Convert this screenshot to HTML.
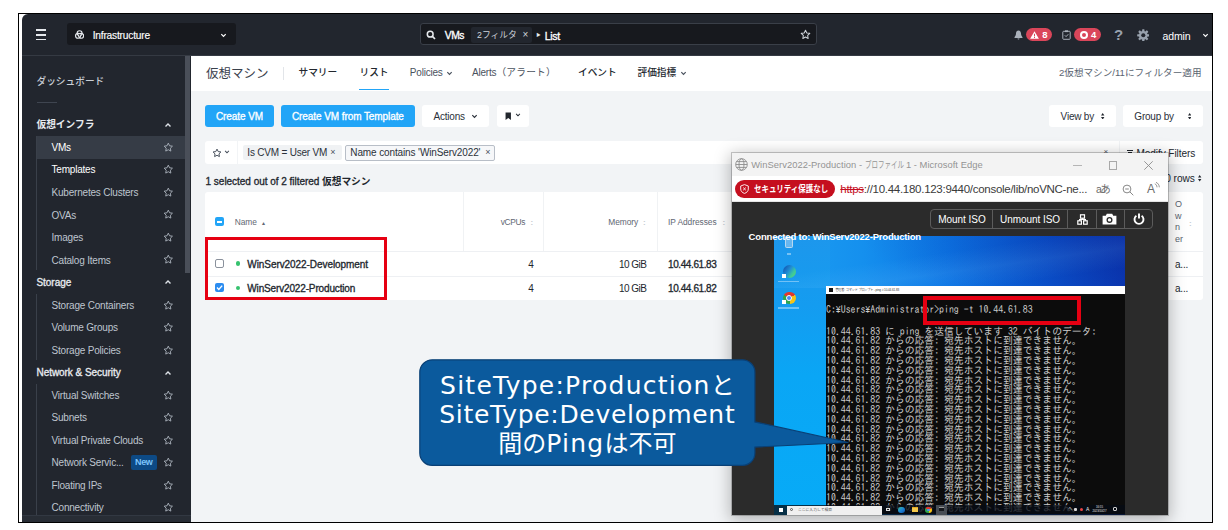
<!DOCTYPE html>
<html lang="ja"><head><meta charset="utf-8"><title>VMs</title>
<style>
*{box-sizing:border-box;margin:0;padding:0}
html,body{width:1228px;height:530px;overflow:hidden;background:#fff}
body{position:relative;font-family:"Liberation Sans","Noto Sans CJK JP",sans-serif;font-size:10px;letter-spacing:-.2px;color:#22272e}
.a{position:absolute;white-space:nowrap}
.b{font-weight:bold;letter-spacing:-.4px}
.sb{font-weight:normal;-webkit-text-stroke:.32px currentColor;letter-spacing:-.08px}
#frame{left:18px;top:13px;width:1195px;height:510px;border:1px solid #000;background:#fff;overflow:hidden}
#app{left:3px;top:0;width:1190px;height:508px;background:#f2f4f6;border-radius:6px 0 0 0;overflow:hidden}
#top{left:0;top:0;width:1190px;height:42px;background:#22262e;border-bottom:1px solid #353a43}
#side{left:0;top:42px;width:169px;height:466px;background:#22262e}
.si{left:29.500px;color:#bfc5ce;font-size:10px;line-height:14px}
.sh{left:14.500px;color:#e8ebef;font-weight:normal;-webkit-text-stroke:.32px currentColor;font-size:10px;line-height:14px;letter-spacing:-.05px}
.cj{font-size:9.700px;letter-spacing:0}
.star{left:140.700px;width:10.600px;height:10.600px}
.chev{left:142px;width:8px;height:8px}
.vl{left:14px;width:1px;background:#3a404a}
#tabs{left:168px;top:42px;width:1022px;height:34px;background:#fff}
.tab{top:11px;font-size:9.700px;line-height:14px;color:#4a525e;letter-spacing:0;font-weight:500}
.btn{top:91px;height:22px;border-radius:3px;line-height:24.400px;font-size:10px;text-align:center}
.blue{background:#22a5f7;color:#fff}
.wbtn{background:#fff;color:#2b313a}
.th{font-size:8.400px;color:#5f6773;line-height:12px;letter-spacing:-.05px}
.td{font-size:10px;color:#22272e;line-height:14px}
.cmd{font-family:"IPAGothic","Noto Sans Mono CJK JP",monospace;font-size:10.400px;line-height:9.790px;color:#cdcdcd;white-space:pre;letter-spacing:0;transform:scaleX(.9465);transform-origin:0 0}
</style></head><body>
<div id="frame" class="a">
<div id="app" class="a">
<div id="top" class="a" style="height:42px">
<div class="a" style="left:13.600000000000001px;top:14.8px;width:10.4px;height:1.8px;background:#e6e9ed"></div>
<div class="a" style="left:13.600000000000001px;top:19.9px;width:10.4px;height:1.8px;background:#e6e9ed"></div>
<div class="a" style="left:13.600000000000001px;top:24.6px;width:10.4px;height:1.8px;background:#e6e9ed"></div>
<div class="a" style="left:45px;top:9.3px;width:168.7px;height:22px;background:#17191e;border-radius:3px"></div>
<svg class="a" style="left:53px;top:16px;width:9.200px;height:9.200px" viewBox="0 0 10 10"><g fill="none" stroke="#e6e9ed" stroke-width="1.250"><circle cx="5" cy="3.500" r="2.700"/><circle cx="3.300" cy="6.300" r="2.700"/><circle cx="6.700" cy="6.300" r="2.700"/></g><path d="M3.700 4.700h2.600L5 6.900z" fill="#17191e"/></svg>
<div class="a " style="left:70.7px;top:14.7px;font-size:10.200px;line-height:14px;color:#fff;letter-spacing:-.2px;-webkit-text-stroke:.15px #fff">Infrastructure</div>
<svg class="a" style="left:198px;top:17.5px;width:7px;height:7px" viewBox="0 0 8 8"><path d="M1.500 2.500L4 5l2.500-2.500" fill="none" stroke="#fff" stroke-width="1.400"/></svg>
<div class="a" style="left:398px;top:9.100000000000001px;width:396.5px;height:22.4px;background:#17191e;border:1px solid #3a3f48;border-radius:3px"></div>
<svg class="a" style="left:403.5px;top:15.5px;width:10px;height:10px" viewBox="0 0 10 10"><circle cx="4.200" cy="4.200" r="2.900" fill="none" stroke="#e6e9ed" stroke-width="1.500"/><path d="M6.400 6.400L9 9" stroke="#e6e9ed" stroke-width="1.700"/></svg>
<div class="a sb" style="left:422.8px;top:14.5px;font-size:10.300px;line-height:14px;color:#fff;letter-spacing:-.5px">VMs</div>
<div class="a" style="left:448.5px;top:12.5px;width:61px;height:16px;background:#22262e;border-radius:2px"></div>
<div class="a " style="left:455px;top:13.5px;font-size:8.800px;line-height:14px;color:#cfd4da;letter-spacing:0">2フィルタ</div>
<div class="a " style="left:500.5px;top:13.8px;font-size:10px;line-height:14px;color:#cfd4da">×</div>
<div class="a " style="left:514.3px;top:14.2px;font-size:4.500px;line-height:14px;color:#e6e9ed">▶</div>
<div class="a sb" style="left:522.8px;top:14.5px;font-size:10.500px;line-height:14px;color:#fff;letter-spacing:-.3px">List</div>
<svg class="a " style="left:778px;top:15px;width:11px;height:11px" viewBox="0 0 12 12"><path d="M6 1.300l1.450 3 3.250.45-2.350 2.300.55 3.250L6 8.750 3.100 10.300l.55-3.250L1.300 4.750l3.250-.45z" fill="none" stroke="#cfd4da" stroke-width="1.1" stroke-linejoin="round"/></svg>
<svg class="a" style="left:991.5px;top:15.5px;width:9px;height:10px" viewBox="0 0 9 10"><path d="M4.500 .5C2.800 .5 2 2 2 3.500 2 5.500 1 6.500 .5 7.200V8h8V7.200C8 6.500 7 5.500 7 3.500 7 2 6.200 .5 4.500 .5zM3.500 8.600a1 1 0 0 0 2 0z" fill="#aab1bb"/></svg>
<div class="a" style="left:1003.7px;top:14.3px;width:26.5px;height:12.6px;background:#da465a;border-radius:7px"></div>
<svg class="a" style="left:1008.3px;top:16.5px;width:9px;height:8px" viewBox="0 0 9 8"><path d="M4.500 .2L8.900 7.800H.1z" fill="#fff"/><path d="M4.500 2.800v2.600M4.500 6v1" stroke="#da465a" stroke-width="1"/></svg>
<div class="a b" style="left:1020.3px;top:14.8px;font-size:9.500px;line-height:12.600px;color:#fff">8</div>
<svg class="a" style="left:1039.5px;top:15.5px;width:9px;height:10px" viewBox="0 0 9 10"><rect x=".8" y="1.300" width="7.400" height="8" rx=".8" fill="none" stroke="#aab1bb" stroke-width="1"/><path d="M2.800 5.300l1.300 1.300 2.200-2.400" fill="none" stroke="#aab1bb" stroke-width="1"/><rect x="3" y=".3" width="3" height="1.800" fill="#aab1bb"/></svg>
<div class="a" style="left:1052.3px;top:14.3px;width:26.5px;height:12.6px;background:#da465a;border-radius:7px"></div>
<div class="a" style="left:1057.8px;top:16.6px;width:8px;height:8px;border:2.300px solid #fff;border-radius:5px"></div>
<div class="a b" style="left:1069px;top:14.8px;font-size:9.500px;line-height:12.600px;color:#fff">4</div>
<div class="a " style="left:1092px;top:11.5px;font-size:15px;line-height:18px;color:#98a1ad;font-weight:bold;letter-spacing:0">?</div>
<svg class="a" style="left:1114.6px;top:14.600000000000001px;width:12.600px;height:12.600px" viewBox="0 0 13 13"><g fill="#98a1ad"><circle cx="6.500" cy="6.500" r="4.500"/><rect x="5.300" y=".2" width="2.400" height="12.600" rx=".5" transform="rotate(0 6.500 6.500)"/><rect x="5.300" y=".2" width="2.400" height="12.600" rx=".5" transform="rotate(45 6.500 6.500)"/><rect x="5.300" y=".2" width="2.400" height="12.600" rx=".5" transform="rotate(90 6.500 6.500)"/><rect x="5.300" y=".2" width="2.400" height="12.600" rx=".5" transform="rotate(135 6.500 6.500)"/></g><circle cx="6.500" cy="6.500" r="2.100" fill="#22262e"/></svg>
<div class="a " style="left:1140.5px;top:14.5px;font-size:10.500px;line-height:14px;color:#fff;letter-spacing:-.12px">admin</div>
<svg class="a" style="left:1179.5px;top:17.5px;width:7px;height:7px" viewBox="0 0 8 8"><path d="M1.500 2.500L4 5l2.500-2.500" fill="none" stroke="#fff" stroke-width="1.400"/></svg>
</div>
<div id="side" class="a" style="top:42px;height:466px">
<div class="a" style="left:14px;top:80px;width:149px;height:23px;background:#363c46"></div>
<div class="a" style="left:162.7px;top:0px;width:5.8px;height:217px;background:#4a4f59"></div>
<div class="a sh cj" style="left:14.5px;top:18.5px;color:#c9ced6;-webkit-text-stroke:0;font-weight:500">ダッシュボード</div>
<div class="a" style="left:14.5px;top:46px;width:20.5px;height:1px;background:#3f4550"></div>
<div class="a sh cj" style="left:14.5px;top:62px;-webkit-text-stroke:0;font-weight:bold">仮想インフラ</div>
<svg class="a" style="left:142px;top:64.5px;width:8px;height:8px" viewBox="0 0 8 8"><path d="M1.500 5.500L4 3l2.500 2.500" fill="none" stroke="#dfe3e8" stroke-width="1.400"/></svg>
<div class="a vl" style="top:80px;height:134px"></div>
<div class="a vl" style="top:238px;height:66px"></div>
<div class="a vl" style="top:328px;height:134px"></div>
<div class="a si" style="left:29.5px;top:84.9px;color:#fff">VMs</div>
<svg class="a star" style="top:85.8px" viewBox="0 0 12 12"><path d="M6 1.300l1.450 3 3.250.45-2.350 2.300.55 3.250L6 8.750 3.100 10.300l.55-3.250L1.300 4.750l3.250-.45z" fill="none" stroke="#aab1bb" stroke-width="1.05" stroke-linejoin="round"/></svg>
<div class="a si" style="left:29.5px;top:107.4px;color:#fff">Templates</div>
<svg class="a star" style="top:108.3px" viewBox="0 0 12 12"><path d="M6 1.300l1.450 3 3.250.45-2.350 2.300.55 3.250L6 8.750 3.100 10.300l.55-3.250L1.300 4.750l3.250-.45z" fill="none" stroke="#aab1bb" stroke-width="1.05" stroke-linejoin="round"/></svg>
<div class="a si" style="left:29.5px;top:129.9px;">Kubernetes Clusters</div>
<svg class="a star" style="top:130.8px" viewBox="0 0 12 12"><path d="M6 1.300l1.450 3 3.250.45-2.350 2.300.55 3.250L6 8.750 3.100 10.300l.55-3.250L1.300 4.750l3.250-.45z" fill="none" stroke="#aab1bb" stroke-width="1.05" stroke-linejoin="round"/></svg>
<div class="a si" style="left:29.5px;top:152.5px;">OVAs</div>
<svg class="a star" style="top:153.4px" viewBox="0 0 12 12"><path d="M6 1.300l1.450 3 3.250.45-2.350 2.300.55 3.250L6 8.750 3.100 10.300l.55-3.250L1.300 4.750l3.250-.45z" fill="none" stroke="#aab1bb" stroke-width="1.05" stroke-linejoin="round"/></svg>
<div class="a si" style="left:29.5px;top:175.0px;">Images</div>
<svg class="a star" style="top:175.9px" viewBox="0 0 12 12"><path d="M6 1.300l1.450 3 3.250.45-2.350 2.300.55 3.250L6 8.750 3.100 10.300l.55-3.250L1.300 4.750l3.250-.45z" fill="none" stroke="#aab1bb" stroke-width="1.05" stroke-linejoin="round"/></svg>
<div class="a si" style="left:29.5px;top:197.5px;">Catalog Items</div>
<svg class="a star" style="top:198.4px" viewBox="0 0 12 12"><path d="M6 1.300l1.450 3 3.250.45-2.350 2.300.55 3.250L6 8.750 3.100 10.300l.55-3.250L1.300 4.750l3.250-.45z" fill="none" stroke="#aab1bb" stroke-width="1.05" stroke-linejoin="round"/></svg>
<div class="a sh" style="left:14.5px;top:220.0px;">Storage</div>
<svg class="a" style="left:142px;top:222.4px;width:8px;height:8px" viewBox="0 0 8 8"><path d="M1.500 5.500L4 3l2.500 2.500" fill="none" stroke="#dfe3e8" stroke-width="1.400"/></svg>
<div class="a si" style="left:29.5px;top:242.6px;">Storage Containers</div>
<svg class="a star" style="top:243.5px" viewBox="0 0 12 12"><path d="M6 1.300l1.450 3 3.250.45-2.350 2.300.55 3.250L6 8.750 3.100 10.300l.55-3.250L1.300 4.750l3.250-.45z" fill="none" stroke="#aab1bb" stroke-width="1.05" stroke-linejoin="round"/></svg>
<div class="a si" style="left:29.5px;top:265.1px;">Volume Groups</div>
<svg class="a star" style="top:266.0px" viewBox="0 0 12 12"><path d="M6 1.300l1.450 3 3.250.45-2.350 2.300.55 3.250L6 8.750 3.100 10.300l.55-3.250L1.300 4.750l3.250-.45z" fill="none" stroke="#aab1bb" stroke-width="1.05" stroke-linejoin="round"/></svg>
<div class="a si" style="left:29.5px;top:287.6px;">Storage Policies</div>
<svg class="a star" style="top:288.5px" viewBox="0 0 12 12"><path d="M6 1.300l1.450 3 3.250.45-2.350 2.300.55 3.250L6 8.750 3.100 10.300l.55-3.250L1.300 4.750l3.250-.45z" fill="none" stroke="#aab1bb" stroke-width="1.05" stroke-linejoin="round"/></svg>
<div class="a sh" style="left:14.5px;top:310.2px;">Network &amp; Security</div>
<svg class="a" style="left:142px;top:312.6px;width:8px;height:8px" viewBox="0 0 8 8"><path d="M1.500 5.500L4 3l2.500 2.500" fill="none" stroke="#dfe3e8" stroke-width="1.400"/></svg>
<div class="a si" style="left:29.5px;top:332.7px;">Virtual Switches</div>
<svg class="a star" style="top:333.6px" viewBox="0 0 12 12"><path d="M6 1.300l1.450 3 3.250.45-2.350 2.300.55 3.250L6 8.750 3.100 10.300l.55-3.250L1.300 4.750l3.250-.45z" fill="none" stroke="#aab1bb" stroke-width="1.05" stroke-linejoin="round"/></svg>
<div class="a si" style="left:29.5px;top:355.2px;">Subnets</div>
<svg class="a star" style="top:356.1px" viewBox="0 0 12 12"><path d="M6 1.300l1.450 3 3.250.45-2.350 2.300.55 3.250L6 8.750 3.100 10.300l.55-3.250L1.300 4.750l3.250-.45z" fill="none" stroke="#aab1bb" stroke-width="1.05" stroke-linejoin="round"/></svg>
<div class="a si" style="left:29.5px;top:377.7px;">Virtual Private Clouds</div>
<svg class="a star" style="top:378.6px" viewBox="0 0 12 12"><path d="M6 1.300l1.450 3 3.250.45-2.350 2.300.55 3.250L6 8.750 3.100 10.300l.55-3.250L1.300 4.750l3.250-.45z" fill="none" stroke="#aab1bb" stroke-width="1.05" stroke-linejoin="round"/></svg>
<div class="a si" style="left:29.5px;top:400.2px;">Network Servic...</div>
<svg class="a star" style="top:401.1px" viewBox="0 0 12 12"><path d="M6 1.300l1.450 3 3.250.45-2.350 2.300.55 3.250L6 8.750 3.100 10.300l.55-3.250L1.300 4.750l3.250-.45z" fill="none" stroke="#aab1bb" stroke-width="1.05" stroke-linejoin="round"/></svg>
<div class="a si" style="left:29.5px;top:422.8px;">Floating IPs</div>
<svg class="a star" style="top:423.7px" viewBox="0 0 12 12"><path d="M6 1.300l1.450 3 3.250.45-2.350 2.300.55 3.250L6 8.750 3.100 10.300l.55-3.250L1.300 4.750l3.250-.45z" fill="none" stroke="#aab1bb" stroke-width="1.05" stroke-linejoin="round"/></svg>
<div class="a si" style="left:29.5px;top:445.3px;">Connectivity</div>
<svg class="a star" style="top:446.2px" viewBox="0 0 12 12"><path d="M6 1.300l1.450 3 3.250.45-2.350 2.300.55 3.250L6 8.750 3.100 10.300l.55-3.250L1.300 4.750l3.250-.45z" fill="none" stroke="#aab1bb" stroke-width="1.05" stroke-linejoin="round"/></svg>
<div class="a b" style="left:109px;top:399px;width:25.500px;height:15px;background:#0d4a85;border-radius:2px;color:#7cc4fb;font-size:9px;line-height:15px;text-align:center">New</div>
<div class="a" style="left:0px;top:459px;width:169px;height:8px;background:#282d35;border-top:1px solid #323842"></div>
</div>
<div id="tabs" class="a" style="left:169px;top:42px;width:1022px;height:34.500px">
<div class="a " style="left:15px;top:10.3px;font-size:12.500px;line-height:16px;color:#3a414c;letter-spacing:0">仮想マシン</div>
<div class="a" style="left:91.5px;top:11px;width:1px;height:13px;background:#e2e5e9"></div>
<div class="a tab" style="left:107.5px;top:10.3px;color:#22272e">サマリー</div>
<div class="a tab" style="left:168.5px;top:10.3px;color:#22272e">リスト</div>
<div class="a" style="left:168.3px;top:33.2px;width:29.3px;height:1.3px;background:#22a5f7"></div>
<div class="a tab" style="left:218.8px;top:10.3px;font-size:10px;letter-spacing:-.2px;font-weight:normal">Policies</div>
<svg class="a" style="left:254.5px;top:13.8px;width:7px;height:7px" viewBox="0 0 8 8"><path d="M1.500 2.500L4 5l2.500-2.500" fill="none" stroke="#4a525e" stroke-width="1.400"/></svg>
<div class="a tab" style="left:281px;top:10.3px;font-size:10px;letter-spacing:-.2px;font-weight:normal">Alerts<span style="font-size:9.700px;letter-spacing:.23px">（アラート）</span></div>
<div class="a tab" style="left:387px;top:10.3px;color:#22272e">イベント</div>
<div class="a tab" style="left:446.5px;top:10.3px;color:#22272e">評価指標</div>
<svg class="a" style="left:488.5px;top:13.8px;width:7px;height:7px" viewBox="0 0 8 8"><path d="M1.500 2.500L4 5l2.500-2.500" fill="none" stroke="#4a525e" stroke-width="1.400"/></svg>
<div class="a tab" style="left:868px;top:10.3px;font-size:9.600px;color:#5a6470;font-weight:normal">2仮想マシン/11にフィルター適用</div>
</div>
<div class="a btn blue sb" style="left:183.4px;width:68.2px;">Create VM</div>
<div class="a btn blue sb" style="left:259px;width:133.8px;">Create VM from Template</div>
<div class="a btn wbtn" style="left:400px;width:67px;text-align:left;padding-left:11.500px">Actions</div>
<svg class="a" style="left:448.5px;top:99px;width:7px;height:7px" viewBox="0 0 8 8"><path d="M1.500 2.500L4 5l2.500-2.500" fill="none" stroke="#2b313a" stroke-width="1.400"/></svg>
<div class="a btn wbtn" style="left:474.5px;width:32.6px;"></div>
<svg class="a" style="left:482.7px;top:98px;width:6.500px;height:8.500px" viewBox="0 0 7 9"><path d="M.6 .5h5.800v8L3.500 6.500.6 8.500z" fill="#22272e"/></svg>
<svg class="a" style="left:492.6px;top:98px;width:6px;height:6px" viewBox="0 0 8 8"><path d="M1.500 2.500L4 5l2.500-2.500" fill="none" stroke="#2b313a" stroke-width="1.400"/></svg>
<div class="a btn wbtn" style="left:1027.1px;width:66.6px;text-align:left;padding-left:11.500px">View by</div>
<svg class="a" style="left:1079.3px;top:98.9px;width:3.4px;height:6.6px" viewBox="0 0 34 66"><path d="M17 0L34 26H0zM17 66L0 40H34z" fill="#22272e"/></svg>
<div class="a btn wbtn" style="left:1100.8px;width:80.2px;text-align:left;padding-left:11.500px">Group by</div>
<svg class="a" style="left:1165.9px;top:98.9px;width:3.4px;height:6.6px" viewBox="0 0 34 66"><path d="M17 0L34 26H0zM17 66L0 40H34z" fill="#22272e"/></svg>
<div class="a" style="left:183.4px;top:127.30000000000001px;width:997.6px;height:22.6px;background:#fff;border-radius:3px"></div>
<svg class="a " style="left:189.5px;top:133.8px;width:10px;height:10px" viewBox="0 0 12 12"><path d="M6 1.300l1.450 3 3.250.45-2.350 2.300.55 3.250L6 8.750 3.100 10.300l.55-3.250L1.300 4.750l3.250-.45z" fill="none" stroke="#4a525e" stroke-width="1.2" stroke-linejoin="round"/></svg>
<svg class="a" style="left:202px;top:135px;width:6px;height:6px" viewBox="0 0 8 8"><path d="M1.500 2.500L4 5l2.500-2.500" fill="none" stroke="#4a525e" stroke-width="1.400"/></svg>
<div class="a" style="left:214.5px;top:127.30000000000001px;width:1px;height:22.6px;background:#f2f4f6"></div>
<div class="a" style="left:220.8px;top:131.3px;width:99.500px;height:15px;background:#f0f2f4;border-radius:2px;line-height:15px;padding-left:4.500px;color:#2b313a">Is CVM = User VM<span style="position:absolute;left:87.500px;top:-.5px;font-size:9px;color:#4a525e">×</span></div>
<div class="a" style="left:323.3px;top:131px;width:150px;height:15.500px;background:#f6f7f9;border:1px solid #b8bec7;border-radius:2px;line-height:13.500px;padding-left:4px;color:#2b313a;letter-spacing:-.12px">Name contains 'WinServ2022'<span style="position:absolute;left:139px;top:-.5px;font-size:9px;color:#4a525e">×</span></div>
<div class="a " style="left:1081.5px;top:132px;font-size:8px;line-height:12px;color:#4a525e">×</div>
<div class="a" style="left:1097px;top:127.30000000000001px;width:1px;height:22.6px;background:#f2f4f6"></div>
<div class="a" style="left:1105px;top:136px;width:6.4px;height:1.2px;background:#22272e"></div>
<div class="a" style="left:1106px;top:138.2px;width:4.4px;height:1.2px;background:#22272e"></div>
<div class="a" style="left:1107px;top:140.4px;width:2.4px;height:1.2px;background:#22272e"></div>
<div class="a " style="left:1114.5px;top:133px;font-size:10.100px;line-height:14px;color:#22272e;letter-spacing:-.1px">Modify Filters</div>
<div class="a sb" style="left:183.6px;top:160.5px;font-size:10px;line-height:14px;color:#22272e;letter-spacing:-.03px">1 selected out of 2 filtered <span style="font-size:9.700px;letter-spacing:0;font-weight:bold;-webkit-text-stroke:0">仮想マシン</span></div>
<div class="a " style="left:1143.3px;top:157.9px;font-size:10.200px;line-height:14px;color:#22272e;letter-spacing:-.1px">0 rows</div>
<svg class="a" style="left:1176.4px;top:161.3px;width:3.4px;height:6.6px" viewBox="0 0 34 66"><path d="M17 0L34 26H0zM17 66L0 40H34z" fill="#22272e"/></svg>
<div class="a" style="left:183.4px;top:178.3px;width:997.6px;height:108.1px;background:#fff;border-radius:3px"></div>
<div class="a" style="left:441px;top:178.3px;width:1px;height:59px;background:#f0f2f4"></div>
<div class="a" style="left:521px;top:178.3px;width:1px;height:59px;background:#f0f2f4"></div>
<div class="a" style="left:634.5px;top:178.3px;width:1px;height:59px;background:#f0f2f4"></div>
<div class="a" style="left:183.4px;top:237.4px;width:997.6px;height:1px;background:#eef0f3"></div>
<div class="a" style="left:183.4px;top:261.7px;width:997.6px;height:1px;background:#eef0f3"></div>
<div class="a" style="left:193px;top:203.3px;width:9px;height:9px;background:#22a5f7;border-radius:2px"></div>
<div class="a" style="left:195px;top:207px;width:5px;height:1.6px;background:#fff"></div>
<div class="a th" style="left:212.7px;top:202px;">Name</div>
<div class="a th" style="left:240px;top:203px;font-size:6px">▴</div>
<div class="a th" style="left:463px;top:202px;width:40px;text-align:right;letter-spacing:-.35px">vCPUs</div>
<div class="a th b" style="left:508.5px;top:203px;color:#c5cad1;font-size:8px">:</div>
<div class="a th" style="left:566px;top:202px;width:50px;text-align:right;letter-spacing:-.1px">Memory</div>
<div class="a th b" style="left:621px;top:203px;color:#c5cad1;font-size:8px">:</div>
<div class="a th" style="left:646px;top:202px;">IP Addresses</div>
<div class="a th b" style="left:700.5px;top:203px;color:#c5cad1;font-size:8px">:</div>
<div class="a th" style="left:1153px;top:185px;width:10px;white-space:normal;word-break:break-all;line-height:11.500px;font-size:9px;color:#5a6470">O<br>w<br>n<br>er</div>
<div class="a th b" style="left:1167px;top:204px;color:#c5cad1;font-size:8px">:</div>
<div class="a" style="left:193px;top:244.89999999999998px;width:9px;height:9px;background:#fff;border:1px solid #8a919c;border-radius:2px"></div>
<div class="a" style="left:213.5px;top:247.2px;width:4.4px;height:4.4px;background:#36c26e;border-radius:3px"></div>
<div class="a td sb" style="left:225.3px;top:243.5px;letter-spacing:-0.07px">WinServ2022-Development</div>
<div class="a td" style="left:481.5px;top:243.5px;width:30px;text-align:right">4</div>
<div class="a td" style="left:574.5px;top:243.5px;width:50px;text-align:right;letter-spacing:-.5px">10 GiB</div>
<div class="a td sb" style="left:646px;top:243.5px;letter-spacing:-.4px">10.44.61.83</div>
<div class="a td" style="left:1153px;top:243.5px;">a...</div>
<div class="a" style="left:193px;top:269.3px;width:9px;height:9px;background:#2b8cf0;border-radius:2px"></div>
<svg class="a" style="left:193px;top:269.3px;width:9px;height:9px" viewBox="0 0 9 9"><path d="M2 4.600l1.800 1.800L7.200 2.600" fill="none" stroke="#fff" stroke-width="1.400"/></svg>
<div class="a" style="left:213.5px;top:271.6px;width:4.4px;height:4.4px;background:#36c26e;border-radius:3px"></div>
<div class="a td sb" style="left:225.3px;top:267.6px;letter-spacing:-0.14999999999999997px">WinServ2022-Production</div>
<div class="a td" style="left:481.5px;top:267.6px;width:30px;text-align:right">4</div>
<div class="a td" style="left:574.5px;top:267.6px;width:50px;text-align:right;letter-spacing:-.5px">10 GiB</div>
<div class="a td sb" style="left:646px;top:267.6px;letter-spacing:-.4px">10.44.61.82</div>
<div class="a td" style="left:1153px;top:267.6px;">a...</div>
<div class="a" style="left:183.3px;top:223px;width:181.5px;height:62.7px;border:3.500px solid #e60012"></div>
<div class="a" id="pop" style="left:709.6px;top:139.1px;width:436.1px;height:362.3px;box-shadow:0 3px 15px 2px rgba(0,0,0,.26);outline:1px solid rgba(0,0,0,.2)"></div>
<div class="a" style="left:709.6px;top:139.1px;width:436.1px;height:362.3px;background:#2b2b2b;overflow:hidden;letter-spacing:0">
<div class="a" style="left:0px;top:0px;width:436.1px;height:23.4px;background:#f3f3f3"></div>
<svg class="a" style="left:3.0px;top:5.1px;width:13px;height:13px" viewBox="0 0 13 13"><g fill="none" stroke="#8c8c8c" stroke-width=".9"><circle cx="6.500" cy="6.500" r="5.800"/><ellipse cx="6.500" cy="6.500" rx="2.500" ry="5.800"/><path d="M.8 6.500h11.400M1.600 3.600h9.800M1.600 9.400h9.800"/></g></svg>
<div class="a ttl" style="left:19.6px;top:4.9px;font-size:9.400px;line-height:14px;color:#939393;letter-spacing:.04px">WinServ2022-Production - <span style="display:inline-block;width:38.500px;height:12px;vertical-align:top"><span style="display:inline-block;transform:scaleX(.69);transform-origin:0 50%">プロファイル</span></span> 1 - Microsoft Edge</div>
<div class="a" style="left:341.4px;top:11.7px;width:9px;height:1px;background:#b5b5b5"></div>
<div class="a" style="left:377.4px;top:8.1px;width:8.5px;height:8.5px;border:1px solid #a8a8a8"></div>
<svg class="a" style="left:412.9px;top:7.9px;width:9px;height:9px" viewBox="0 0 9 9"><path d="M.3 .3l8.400 8.400M8.700 .3L.3 8.700" stroke="#8c8c8c" stroke-width=".9"/></svg>
<div class="a" style="left:0px;top:23.4px;width:436.1px;height:25.8px;background:#fff;border-bottom:1px solid #e5e5e5"></div>
<div class="a" style="left:3.2px;top:27.2px;width:99.8px;height:18px;background:#c50f1f;border-radius:9px"></div>
<svg class="a" style="left:8.4px;top:31.2px;width:9px;height:10px" viewBox="0 0 9 10"><path d="M4.500 .6L8.300 2v3c0 2.200-1.600 3.700-3.800 4.400C2.300 8.700 .7 7.200 .7 5V2z" fill="none" stroke="#fff" stroke-width=".9"/><path d="M3.200 3.600l2.600 2.600M5.800 3.600L3.200 6.200" stroke="#fff" stroke-width=".9"/></svg>
<div class="a " style="left:22.8px;top:29.2px;font-size:9.300px;line-height:14px;color:#fff;font-weight:bold;letter-spacing:0;transform:scaleX(.802);transform-origin:0 50%">セキュリティ保護なし</div>
<div class="a url" style="left:108.7px;top:27.9px;font-size:11.500px;line-height:17px;color:#3b3b3b;letter-spacing:-.28px"><span style="color:#c50f1f;text-decoration:line-through">https</span>://10.44.180.123:9440/console/lib/noVNC-ne...</div>
<div class="a " style="left:364.4px;top:29.2px;font-size:10.500px;line-height:14px;color:#6a6a6a;letter-spacing:-1.600px">aあ</div>
<svg class="a" style="left:390.4px;top:30.9px;width:12px;height:12px" viewBox="0 0 12 12"><circle cx="5" cy="5" r="3.900" fill="none" stroke="#7a7a7a" stroke-width=".9"/><path d="M7.800 7.800L11.300 11.300M3.200 5h3.600" stroke="#7a7a7a" stroke-width=".9"/></svg>
<div class="a " style="left:415.4px;top:28.4px;font-size:12px;line-height:16px;color:#6a6a6a">A</div>
<svg class="a" style="left:422.4px;top:29.4px;width:6px;height:8px" viewBox="0 0 6 8"><path d="M.8 1.800c1.300 .5 2.200 1.800 2.200 3.500M2 .3c2 .8 3.300 2.700 3.300 5" fill="none" stroke="#7a7a7a" stroke-width=".8"/></svg>
<div class="a" style="left:198.4px;top:56.0px;width:223.4px;height:20.1px;border:1px solid #5c5c5c;border-radius:4px;background:#2b2b2b"></div>
<div class="a" style="left:260.4px;top:56.0px;width:1px;height:20.1px;background:#5c5c5c"></div>
<div class="a" style="left:335.7px;top:56.0px;width:1px;height:20.1px;background:#5c5c5c"></div>
<div class="a" style="left:364.0px;top:56.0px;width:1px;height:20.1px;background:#5c5c5c"></div>
<div class="a" style="left:392.7px;top:56.0px;width:1px;height:20.1px;background:#5c5c5c"></div>
<div class="a " style="left:206.7px;top:60.3px;font-size:10px;line-height:14px;color:#fff;letter-spacing:-.05px">Mount ISO</div>
<div class="a " style="left:268.4px;top:60.3px;font-size:10px;line-height:14px;color:#fff;letter-spacing:-.05px">Unmount ISO</div>
<svg class="a" style="left:345.0px;top:60.9px;width:11px;height:11px" viewBox="0 0 11 11"><g fill="none" stroke="#fff" stroke-width="1.200"><rect x="3.500" y=".8" width="4" height="3.400"/><rect x=".8" y="6.800" width="3.600" height="3.400"/><rect x="6.600" y="6.800" width="3.600" height="3.400"/><path d="M5.500 4.200v1.300M2.600 6.800V5.500h5.800v1.300"/></g></svg>
<svg class="a" style="left:370.8px;top:60.4px;width:15px;height:12px" viewBox="0 0 15 12"><path d="M.6 2.800h3.200l1-2h5.400l1 2h3.200v8.600H.6z" fill="#fff"/><circle cx="7.500" cy="6.900" r="3" fill="#2b2b2b"/><circle cx="7.500" cy="6.900" r="1.700" fill="#fff"/></svg>
<svg class="a" style="left:401.4px;top:60.4px;width:12px;height:12px" viewBox="0 0 12 12"><path d="M3.400 2.700a4.500 4.500 0 1 0 5.200 0" fill="none" stroke="#fff" stroke-width="1.900"/><path d="M6 .4v5.200" stroke="#fff" stroke-width="1.900"/></svg>
<div class="a" style="left:42.1px;top:82.5px;width:351.3px;height:279.0px;background:linear-gradient(to right,#1c9ff2 0,#1590ee 25%,#0c74e4 50%,#0a52cc 78%,#0a38b2 100%);overflow:hidden">
<div class="a" style="left:0px;top:0px;width:56px;height:279.0px;background:linear-gradient(180deg,#1d97ec 0,#149cf0 25%,#0aa6f5 50%,#07abf7 100%)"></div>
<div class="a" style="left:0px;top:0px;width:351.3px;height:52px;background:linear-gradient(172deg,rgba(255,255,255,0) 40%,rgba(120,200,255,.14) 60%,rgba(255,255,255,0) 80%)"></div>
<div class="a" style="left:0px;top:0px;width:351.3px;height:52px;background:radial-gradient(ellipse 75% 130% at 100% 0,rgba(8,20,130,.28) 0,rgba(8,20,130,0) 100%)"></div>
<div class="a" style="left:11.3px;top:1.9px;width:8.5px;height:11px;border:1px solid rgba(215,228,240,.75);border-top:1.500px solid rgba(230,238,246,.9);background:rgba(225,235,245,.38);border-radius:1px 1px 2px 2px"></div>
<div class="a" style="left:13.8px;top:17.9px;width:4px;height:1.4px;background:rgba(255,255,255,.4)"></div>
<div class="a" style="left:8.9px;top:29.6px;width:13px;height:12.6px;border-radius:7px;background:linear-gradient(125deg,#155fb8 15%,#1f8fd6 45%,#3cc7a0 70%,#5ada6e 95%)"></div>
<div class="a" style="left:8.8px;top:38.4px;width:4px;height:4px;background:#fff"></div>
<div class="a" style="left:4.8px;top:45.0px;width:21px;height:1.6px;background:rgba(255,255,255,.38)"></div>
<div class="a" style="left:8.9px;top:56.2px;width:13px;height:12.6px;border-radius:7px;background:conic-gradient(from -60deg,#e2382c 0 33.300%,#f5c416 0 66.600%,#2fa64d 0)"></div>
<div class="a" style="left:12.3px;top:59.4px;width:6.2px;height:6.2px;border-radius:4px;background:#4a8af4;border:1.200px solid #fff"></div>
<div class="a" style="left:8.8px;top:64.9px;width:4px;height:4px;background:#fff"></div>
<div class="a" style="left:4.8px;top:71.6px;width:21px;height:1.6px;background:rgba(255,255,255,.38)"></div>
<div class="a" style="left:52.4px;top:50.5px;width:298.90000000000003px;height:8.4px;background:#fff"></div>
<div class="a" style="left:55.2px;top:52.6px;width:4.2px;height:4px;background:#151515"></div>
<div class="a ctl" style="left:61.7px;top:51.7px;font-size:3.100px;line-height:6px;color:#3c3c3c;letter-spacing:-.12px">管理者: コマンド プロンプト - ping  -t 10.44.61.83</div>
<div class="a" style="left:52.4px;top:58.8px;width:298.90000000000003px;height:220px;background:#0c0c0c"></div>
<div class="a cmd" style="left:52.7px;top:69.4px">C:<span style="font-family:'Liberation Mono',monospace;font-size:8.667px;display:inline-block;transform:scaleY(1.180)">¥</span>Users<span style="font-family:'Liberation Mono',monospace;font-size:8.667px;display:inline-block;transform:scaleY(1.180)">¥</span>Administrator>ping -t 10.44.61.83

10.44.61.83 に ping を送信しています 32 バイトのデータ:
10.44.61.82 からの応答: 宛先ホストに到達できません。
10.44.61.82 からの応答: 宛先ホストに到達できません。
10.44.61.82 からの応答: 宛先ホストに到達できません。
10.44.61.82 からの応答: 宛先ホストに到達できません。
10.44.61.82 からの応答: 宛先ホストに到達できません。
10.44.61.82 からの応答: 宛先ホストに到達できません。
10.44.61.82 からの応答: 宛先ホストに到達できません。
10.44.61.82 からの応答: 宛先ホストに到達できません。
10.44.61.82 からの応答: 宛先ホストに到達できません。
10.44.61.82 からの応答: 宛先ホストに到達できません。
10.44.61.82 からの応答: 宛先ホストに到達できません。
10.44.61.82 からの応答: 宛先ホストに到達できません。
10.44.61.82 からの応答: 宛先ホストに到達できません。
10.44.61.82 からの応答: 宛先ホストに到達できません。
10.44.61.82 からの応答: 宛先ホストに到達できません。
10.44.61.82 からの応答: 宛先ホストに到達できません。
10.44.61.82 からの応答: 宛先ホストに到達できません。
10.44.61.82 からの応答: 宛先ホストに到達できません。</div>
<div class="a" style="left:149.4px;top:60.1px;width:158.1px;height:29.1px;border:4.200px solid #e60012"></div>
<div class="a" style="left:0px;top:269.7px;width:351.3px;height:10px;background:rgba(6,12,20,.78)"></div>
<div class="a" style="left:5.0px;top:272.0px;width:4.6px;height:4.6px;background:#fff"></div>
<div class="a" style="left:13.6px;top:270.0px;width:94.3px;height:9.2px;background:#f0f0f0"></div>
<div class="a" style="left:16.8px;top:272.4px;width:3px;height:3px;border:.6px solid #555;border-radius:2px"></div>
<div class="a " style="left:24.3px;top:271.4px;font-size:3.800px;line-height:6px;color:#555">ここに入力して検索</div>
<div class="a" style="left:112.3px;top:272.4px;width:4px;height:3.5px;border:.7px solid #ddd"></div>
<div class="a" style="left:124.6px;top:271.2px;width:6.4px;height:6.4px;border-radius:4px;background:linear-gradient(140deg,#35c1a0,#1b7fd6 55%,#0c4f9e)"></div>
<div class="a" style="left:138.1px;top:271.9px;width:6.5px;height:5px;background:#f3c84a;border-top:1.500px solid #e0a820"></div>
<div class="a" style="left:151.8px;top:271.2px;width:6.4px;height:6.4px;border-radius:4px;background:conic-gradient(from -60deg,#e2382c 0 33.300%,#f5c416 0 66.600%,#2fa64d 0)"></div>
<div class="a" style="left:153.7px;top:273.1px;width:2.6px;height:2.6px;border-radius:2px;background:#4a8af4"></div>
<div class="a" style="left:162.1px;top:269.7px;width:11.5px;height:9.3px;background:#474d54"></div>
<div class="a" style="left:165.1px;top:271.9px;width:5.5px;height:4px;background:#15181c;border-top:1px solid #999"></div>
<div class="a " style="left:294.3px;top:270.9px;font-size:4.500px;line-height:6px;color:#ddd">へ</div>
<div class="a" style="left:300.3px;top:272.2px;width:3.5px;height:3.5px;background:#d8d8d8;border-radius:1px"></div>
<div class="a" style="left:306.8px;top:272.9px;width:2.6px;height:2.6px;background:#e44;border-radius:2px"></div>
<div class="a " style="left:312.3px;top:270.9px;font-size:5px;line-height:6px;color:#eee">A</div>
<div class="a " style="left:318.8px;top:270.4px;font-size:2.800px;line-height:3.800px;color:#e5e5e5;text-align:center">16:55<br>2023/10/27</div>
<div class="a" style="left:339.8px;top:271.9px;width:4px;height:4px;border:.7px solid #ccc;border-radius:1px"></div>
</div>
<div class="a " style="left:17.0px;top:77.5px;font-size:9.500px;line-height:12px;color:#fff;font-weight:bold;letter-spacing:-.18px">Connected to: WinServ2022-Production</div>
</div>
<svg class="a" style="left:393px;top:341px;width:440px;height:116px" viewBox="0 0 440 116"><path d="M17.3 4.8 H327.4 A12.5 12.5 0 0 1 339.9 17.3 V66.9 L433.4 87.5 L339.9 92.1 V97.9 A12.5 12.5 0 0 1 327.4 110.4 H17.3 A12.5 12.5 0 0 1 4.8 97.9 V17.3 A12.5 12.5 0 0 1 17.3 4.8 Z" fill="#0b5a9d" stroke="#0a4076" stroke-width="1.200"/></svg>
<div class="a" style="left:397.8px;top:357px;width:335.09999999999997px;text-align:center;font-family:'DejaVu Sans','Noto Sans CJK JP',sans-serif;font-size:24px;line-height:30px;color:#fff;letter-spacing:0"><span style="font-size:25px;letter-spacing:1.250px">SiteType:Production</span>と</div>
<div class="a" style="left:397.8px;top:385.8px;width:335.09999999999997px;text-align:center;font-family:'DejaVu Sans','Noto Sans CJK JP',sans-serif;font-size:24px;line-height:30px;color:#fff;letter-spacing:0"><span style="font-size:25px;letter-spacing:.7px">SiteType:Development</span></div>
<div class="a" style="left:397.8px;top:414.8px;width:335.09999999999997px;text-align:center;font-family:'DejaVu Sans','Noto Sans CJK JP',sans-serif;font-size:24px;line-height:30px;color:#fff;letter-spacing:0">間の<span style="font-size:25px;letter-spacing:1.250px">Ping</span>は不可</div>
</div></div>
</body></html>
